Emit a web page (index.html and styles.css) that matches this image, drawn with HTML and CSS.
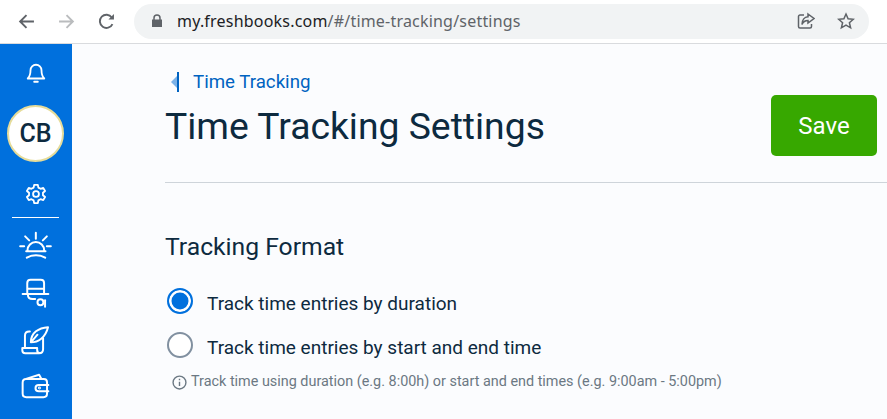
FILE: index.html
```html
<!DOCTYPE html>
<html lang="en">
<head>
  <meta charset="UTF-8">
  <meta name="viewport" content="width=device-width, initial-scale=1.0">
  <title>Time Tracking Settings</title>
  <link rel="stylesheet" href="styles.css">
</head>
<body>
  <div class="toolbar">
    <svg class="nav-icon" viewBox="0 0 16 16"><path d="M15 8H2M8 2L2 8l6 6"/></svg>
    <svg class="nav-icon disabled" viewBox="0 0 16 16"><path d="M1 8h13M8 2l6 6-6 6"/></svg>
    <svg class="nav-icon" viewBox="0 0 16 16"><path d="M13.6 10.400A6.200 6.200 0 1 1 13 4.200"/><path class="solid" d="M15 1v5.200H9.800z"/></svg>
    <div class="address">
      <svg class="lock" viewBox="0 0 12 14"><path class="solid" d="M1 5.500h10V13H1z"/><path d="M3 6V4a3 3 0 0 1 6 0v2"/></svg>
      <span class="url">my.freshbooks.com<span class="url-path">/#/time-tracking/settings</span></span>
      <svg class="addr-icon share" viewBox="0 0 18 18"><path d="M7 3H3a1.500 1.500 0 0 0-1.500 1.500v10A1.500 1.500 0 0 0 3 16h10a1.500 1.500 0 0 0 1.500-1.500V12"/><path d="M11 2l6 4.500-6 4.500V8.500C8 8.500 6 10 5 12.500 5 8 7.500 5 11 4.700z"/></svg>
      <svg class="addr-icon star" viewBox="0 0 18 18"><path d="M9 2l2.100 4.800 5.200.5-3.900 3.400 1.200 5.100L9 13.100l-4.600 2.700 1.200-5.100-3.900-3.400 5.200-.5z"/></svg>
    </div>
  </div>

  <div class="app">
    <nav class="sidebar">
      <svg class="side-icon bell" viewBox="0 0 24 24"><path d="M12 3a6 6 0 0 0-6 6c0 5-1 7-3 9h18c-2-2-3-4-3-9a6 6 0 0 0-6-6z"/><path d="M10 21.500h4"/></svg>
      <div class="avatar">CB</div>
      <svg class="side-icon gear" viewBox="0 0 24 24"><circle cx="12" cy="12" r="3.200"/><path d="M10 2h4l.6 3 2.400 1.300 2.900-1 2 3.400-2.300 2v2.600l2.300 2-2 3.400-2.900-1-2.400 1.300-.6 3h-4l-.6-3L7 17.700l-2.900 1-2-3.400 2.300-2v-2.600l-2.300-2 2-3.400 2.900 1 2.400-1.300z"/></svg>
      <div class="side-rule"></div>
      <svg class="side-icon sun" viewBox="54 182 104 90"><path d="M107 187v18M75 198l12 12M140 198l-12 12M60 228h12M140 228h12M82 240a25 25 0 0 1 50 0M78 243h58M80 262c15-10 40-10 55 0"/></svg>
      <svg class="side-icon hat" viewBox="60 322 94 96"><path d="M82 372v-32q0-10 10-10h31q10 0 10 10v32M82 357h51M68 373h78M84 375q0 13 14 13h8"/><circle cx="122" cy="398" r="9"/><path d="M136 392v20"/></svg>
      <svg class="side-icon quill" viewBox="60 465 94 90"><path d="M90 484H88q-13 0-13 13v34M130 505v33q0 12-12 12H76q-9 0-9-9v-7h45v6q0 10 10 10"/><path d="M145 471c-28 2-52 16-52 46 22 0 44-14 52-46zM93 517l20-23"/></svg>
      <svg class="side-icon wallet" viewBox="60 610 94 78"><path d="M68 640v32q0 11 11 11h52q11 0 11-11v-34q0-10-10-10H78q-10 0-10 11zM76 628l42-13 7 13"/><path d="M146 646h-29q-10 0-10 9.500t10 9.500h29"/><circle cx="119" cy="655" r="1.500"/></svg>
    </nav>

    <main class="content">
      <div class="page-head">
        <div>
          <a class="back" href="#"><span class="back-mark"></span>Time Tracking</a>
          <h1 class="title">Time Tracking Settings</h1>
        </div>
        <button class="save">Save</button>
      </div>
      <div class="divider"></div>

      <h2 class="section">Tracking Format</h2>
      <div class="option">
        <span class="radio checked"></span>
        <span>Track time entries by duration</span>
      </div>
      <div class="option">
        <span class="radio"></span>
        <span>Track time entries by start and end time</span>
      </div>
      <p class="hint">
        <svg class="info" viewBox="0 0 14 14"><circle cx="7" cy="7" r="6"/><path d="M7 6.200v4M7 3.500v1.300"/></svg>
        Track time using duration (e.g. 8:00h) or start and end times (e.g. 9:00am - 5:00pm)
      </p>
    </main>
  </div>
</body>
</html>
```

FILE: styles.css
```css
* {
  box-sizing: border-box;
}

html, body {
  height: 100%;
}

body {
  margin: 0;
  font-family: 'Roboto', sans-serif;
  color: #0d2a3f;
  background: #fbfcfe;
  overflow: hidden;
}

svg {
  fill: none;
  stroke: currentColor;
  flex: none;
}

.toolbar {
  display: flex;
  align-items: center;
  height: 44px;
  padding: 0 10px 1px 18px;
  background: #fff;
  border-bottom: 1px solid #d9dbde;
}

.nav-icon {
  width: 17px;
  height: 17px;
  margin-right: 23px;
  stroke: #5f6368;
  stroke-width: 1.800;
}

.nav-icon.disabled {
  stroke: #babcbe;
}

.nav-icon .solid {
  fill: #5f6368;
  stroke: none;
}

.address {
  display: flex;
  align-items: center;
  width: 735px;
  height: 35px;
  margin-left: -4px;
  padding: 0 14px 0 17px;
  border-radius: 18px;
  background: #f1f3f4;
}

.lock {
  width: 12px;
  height: 14px;
  stroke: #5f6368;
  stroke-width: 1.500;
}

.lock .solid {
  fill: #5f6368;
  stroke: none;
}

.url {
  margin-left: 14px;
  font-family: 'Noto Sans', sans-serif;
  font-size: 16px;
  letter-spacing: 0.2px;
  color: #202124;
  flex: 1;
}

.url-path {
  color: #5f6368;
}

.addr-icon {
  width: 18px;
  height: 18px;
  stroke: #5f6368;
  stroke-width: 1.500;
}

.star {
  margin-left: 22px;
}

.app {
  display: flex;
  height: 375px;
}

.sidebar {
  display: flex;
  flex-direction: column;
  align-items: center;
  width: 72px;
  flex: none;
  padding-right: 1px;
  background: #0070dd;
  color: #fff;
}

.side-icon {
  stroke-width: 2;
  stroke-linecap: round;
  stroke-linejoin: round;
}

.bell {
  width: 22px;
  height: 22px;
  margin-top: 18px;
}

.avatar {
  display: flex;
  align-items: center;
  justify-content: center;
  width: 57px;
  height: 57px;
  margin-top: 21px;
  border: 2px solid #e6dc9a;
  border-radius: 50%;
  background: #fff;
  color: #0d2a3f;
  font-size: 25px;
  font-weight: 500;
}

.gear {
  width: 22px;
  height: 22px;
  margin-top: 21px;
}

.side-rule {
  width: 47px;
  height: 1px;
  margin-top: 12px;
  background: #fff;
}

.sun {
  width: 35px;
  height: 30px;
  margin-top: 13px;
  stroke-width: 6;
}

.hat {
  width: 31px;
  height: 32px;
  margin-top: 16px;
  stroke-width: 6;
}

.quill {
  width: 31px;
  height: 30px;
  margin-top: 16px;
  stroke-width: 6;
}

.wallet {
  width: 31px;
  height: 26px;
  margin-top: 18px;
  stroke-width: 6;
}

.content {
  flex: 1;
  padding: 26px 10px 0 93px;
}

.page-head {
  display: flex;
  justify-content: space-between;
  align-items: flex-start;
  height: 112px;
}

.back {
  display: flex;
  align-items: center;
  color: #0063c1;
  font-size: 18.700px;
  line-height: 24px;
  text-decoration: none;
}

.back-mark {
  width: 2px;
  height: 20px;
  margin: 0 14px 0 12px;
  background: #0063c1;
  position: relative;
}

.back-mark::before {
  content: "";
  position: absolute;
  left: -6px;
  top: 4px;
  border: 6px solid transparent;
  border-left: 0;
  border-right: 6px solid #7cb2e8;
}

.title {
  margin: 6px 0 0;
  font-size: 37.300px;
  font-weight: 400;
  line-height: 52px;
}

.save {
  width: 106px;
  height: 61px;
  margin-top: 25px;
  padding: 0;
  border: none;
  border-radius: 5px;
  background: #37a800;
  color: #fff;
  font-family: inherit;
  font-size: 24px;
}

.divider {
  height: 1px;
  margin-right: -10px;
  background: #ced4da;
}

.section {
  margin: 49px 0 0;
  font-size: 24.700px;
  font-weight: 400;
  line-height: 30px;
}

.option {
  display: flex;
  align-items: center;
  height: 30px;
  margin-top: 14px;
  font-size: 19px;
}

.section + .option {
  margin-top: 24px;
}

.option span:last-child {
  margin-top: 5px;
}

.radio {
  width: 26px;
  height: 26px;
  margin: 0 14px 0 2px;
  border: 2.500px solid #8190a0;
  border-radius: 50%;
  background: #fff;
}

.radio.checked {
  border-color: #0070dd;
  background: #0070dd;
  box-shadow: inset 0 0 0 2.500px #fff;
}

.hint {
  display: flex;
  align-items: center;
  gap: 4px;
  margin: 13px 0 0 7px;
  color: #6b7883;
  font-size: 14.400px;
  line-height: 18px;
}

.info {
  width: 15px;
  height: 15px;
  stroke-width: 1.300;
}
```
